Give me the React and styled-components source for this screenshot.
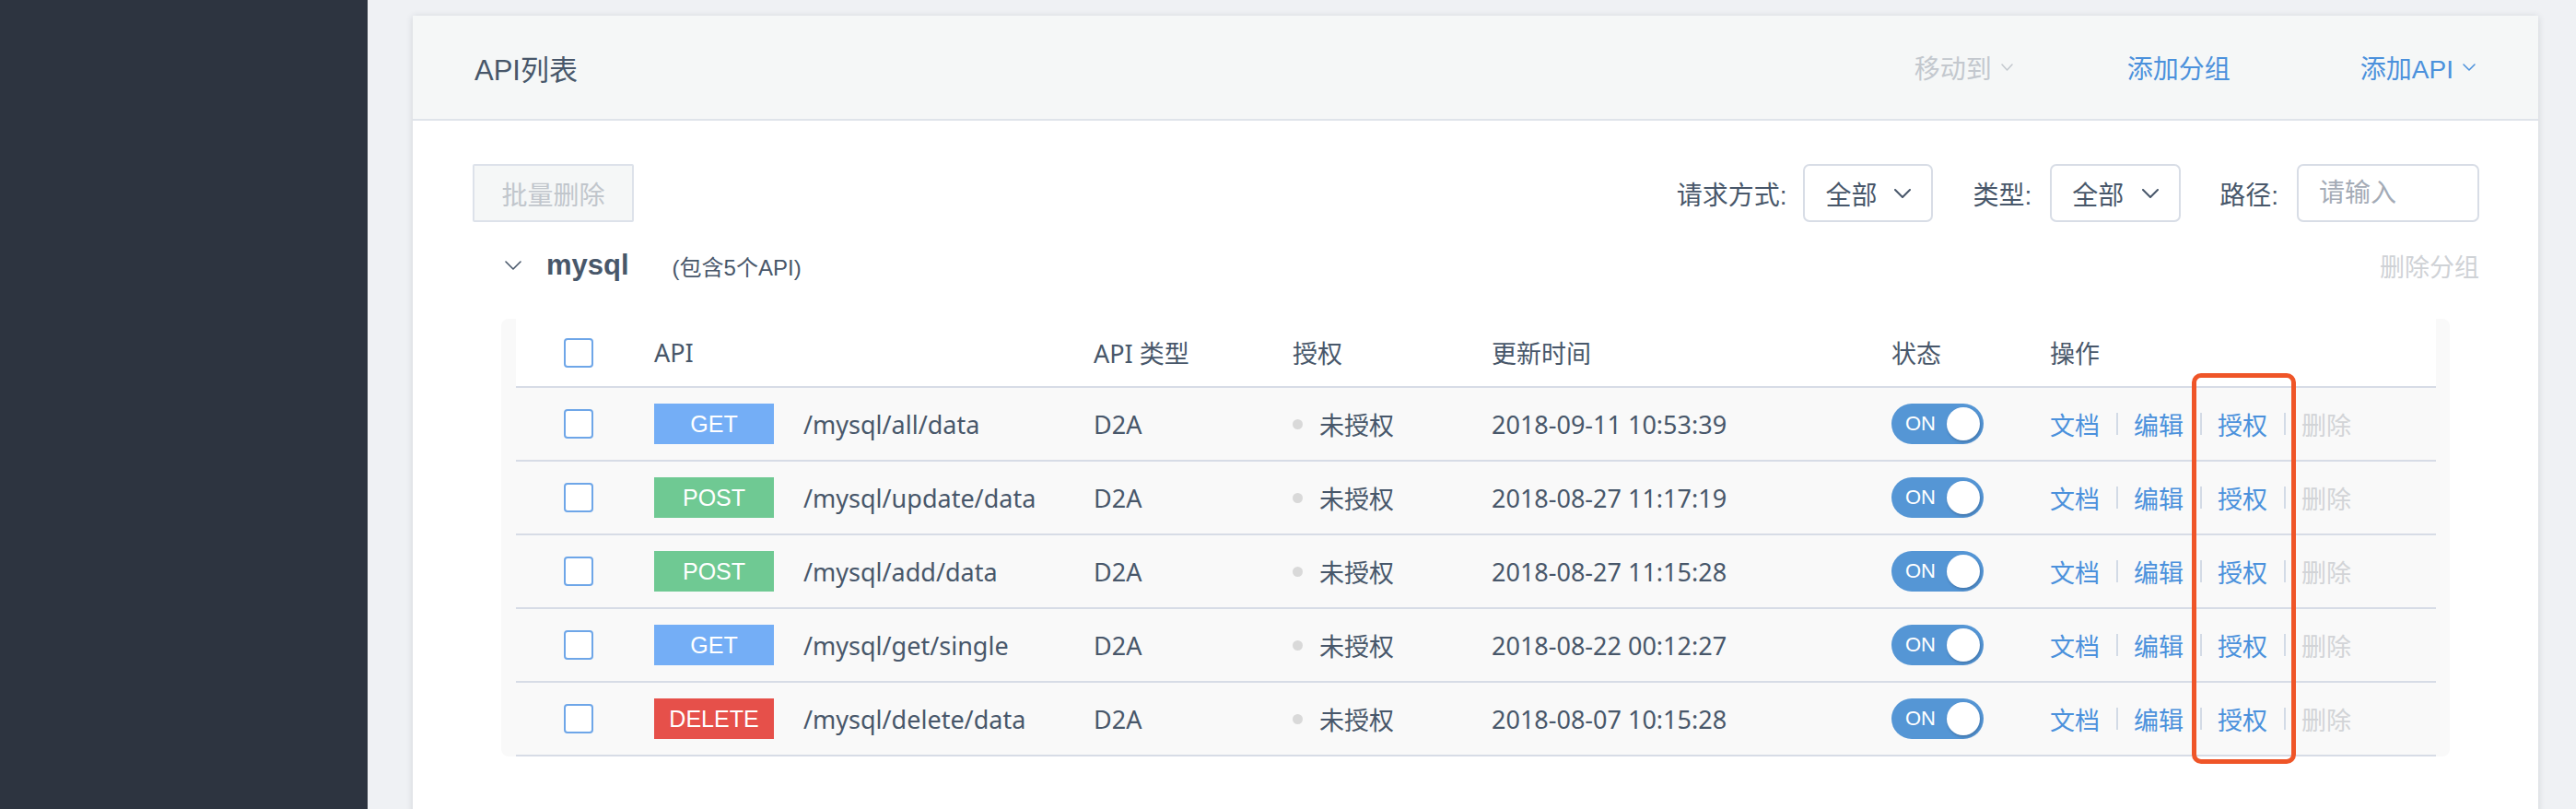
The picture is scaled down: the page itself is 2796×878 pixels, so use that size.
import React from "react";
import styled, { createGlobalStyle } from "styled-components";

const GlobalStyle = createGlobalStyle`
  html, body { margin: 0; padding: 0; }
  body {
    background: #eff1f4;
    font-family: "Liberation Sans", "Noto Sans CJK SC", sans-serif;
    color: #48576a;
  }
  * { box-sizing: border-box; }
`;

const Layout = styled.div`
  display: flex;
  min-height: 878px;
  height: 878px;
  overflow: hidden;
`;

const Sidebar = styled.aside`
  width: 399px;
  flex: none;
  background: #2d3440;
`;

const Main = styled.main`
  flex: 1;
  padding: 17px 41px 0 49px;
`;

const Card = styled.section`
  background: #fff;
  min-height: 900px;
  box-shadow: 0 1px 7px rgba(40, 50, 70, 0.16);
`;

const CardHeader = styled.header`
  height: 114px;
  background: #f5f7f7;
  border-bottom: 2px solid #dfe4ea;
  display: flex;
  align-items: center;
  justify-content: space-between;
  padding: 0 68px 0 67px;
`;

const Title = styled.h1`
  margin: 0;
  font-size: 31px;
  font-weight: 400;
  color: #48576a;
`;

const HeaderActions = styled.div`
  display: flex;
  align-items: center;
`;

const HeaderAction = styled.span`
  display: inline-flex;
  align-items: center;
  gap: 10px;
  font-size: 28px;
  margin-left: ${(p) => p.$ml || 0}px;
  color: ${(p) => (p.$disabled ? "#c3c8ce" : "#4b91dc")};
`;

const Body = styled.div`
  padding: 47px 64px 0 65px;
`;

const Toolbar = styled.div`
  display: flex;
  align-items: center;
  justify-content: space-between;
  height: 63px;
`;

const BatchButton = styled.button`
  width: 175px;
  height: 63px;
  border: 2px solid #dde2ea;
  background: #f5f7f7;
  color: #c1c6cc;
  font-family: inherit;
  font-size: 28px;
  border-radius: 2px;
  padding: 0;
`;

const Filters = styled.div`
  display: flex;
  align-items: center;
`;

const FilterLabel = styled.span`
  font-size: 28px;
  color: #48576a;
  margin-left: ${(p) => p.$ml || 0}px;
  margin-right: ${(p) => p.$mr || 18}px;
`;

const Select = styled.div`
  width: ${(p) => p.$w}px;
  height: 63px;
  border: 2px solid #d8dde6;
  border-radius: 7px;
  display: flex;
  align-items: center;
  padding: 0 22px 0 22px;
  justify-content: space-between;
  font-size: 28px;
  color: #48576a;
  background: #fff;
`;

const Input = styled.input`
  width: 198px;
  height: 63px;
  border: 2px solid #d8dde6;
  border-radius: 7px;
  padding: 0 0 0 22px;
  font-family: inherit;
  font-size: 28px;
  color: #48576a;
  outline: none;
  &::placeholder { color: #a4abb6; }
`;

const GroupRow = styled.div`
  margin-top: 27px;
  height: 40px;
  display: flex;
  align-items: center;
`;

const GroupToggle = styled.span`
  display: inline-flex;
  margin-left: 35px;
  margin-right: 27px;
`;

const GroupName = styled.span`
  font-size: 31px;
  font-weight: 700;
  color: #48576a;
`;

const GroupCount = styled.span`
  font-size: 24px;
  color: #48576a;
  margin-left: 47px;
`;

const GroupDelete = styled.span`
  margin-left: auto;
  font-size: 27px;
  color: #cfd2d6;
`;

const TableWrap = styled.div`
  position: relative;
  margin: 38px 32px 0 31px;
  background: #f9f9f9;
  border-radius: 8px;
  padding: 0 15px 0 16px;
`;

const Row = styled.div`
  display: grid;
  grid-template-columns: 150px 477px 216px 216px 434px 172px 1fr;
  align-items: center;
  height: ${(p) => (p.$head ? 75 : 80)}px;
  border-bottom: 2px solid #d7dce6;
  background: ${(p) => (p.$head ? "#fff" : "#f9f9f9")};
  font-family: "Noto Sans", "Noto Sans CJK SC", sans-serif;
  font-size: 27px;
  color: #48576a;
`;

const Cell = styled.div`
  display: flex;
  align-items: center;
  white-space: nowrap;
  padding-left: ${(p) => p.$pl || 0}px;
`;

const Checkbox = styled.span`
  width: 32px;
  height: 32px;
  border: 2px solid #6ea6e8;
  border-radius: 4px;
  background: #fff;
`;

const METHOD_COLORS = {
  GET: "#74aef6",
  POST: "#6fc993",
  DELETE: "#e6504a",
};

const MethodBadge = styled.span`
  width: 130px;
  height: 44px;
  display: inline-flex;
  align-items: center;
  justify-content: center;
  color: #fff;
  font-family: "Liberation Sans", sans-serif;
  font-size: 25px;
  background: ${(p) => METHOD_COLORS[p.$method]};
  margin-right: 32px;
`;

const Dot = styled.span`
  width: 11px;
  height: 11px;
  border-radius: 50%;
  background: #d9d9d9;
  margin-right: 18px;
`;

const Toggle = styled.span`
  position: relative;
  width: 100px;
  height: 44px;
  border-radius: 22px;
  background: #5596d5;
  color: #fff;
  font-family: "Liberation Sans", sans-serif;
  font-size: 22px;
  display: inline-flex;
  align-items: center;
  padding-left: 15px;
`;

const Knob = styled.span`
  position: absolute;
  right: 4px;
  top: 4px;
  width: 36px;
  height: 36px;
  border-radius: 50%;
  background: #fff;
  box-shadow: 1px 2px 3px rgba(30, 60, 100, 0.35);
`;

const OpLink = styled.span`
  color: ${(p) => (p.$disabled ? "#d2d4d7" : "#4b91dc")};
`;

const OpSep = styled.span`
  width: 2px;
  height: 24px;
  background: #d3dbe6;
  margin: 0 17px 0 18px;
`;

const Highlight = styled.div`
  position: absolute;
  left: 1835px;
  top: 59px;
  width: 113px;
  height: 424px;
  border: 5px solid #ef5528;
  border-radius: 10px;
  pointer-events: none;
`;

const Chevron = ({ w = 18, h = 10, color = "#48576a", sw = 2 }) => (
  <svg width={w} height={h} viewBox={`0 0 ${w} ${h}`} fill="none">
    <polyline
      points={`1,1 ${w / 2},${h - 1} ${w - 1},1`}
      stroke={color}
      strokeWidth={sw}
      strokeLinecap="round"
      strokeLinejoin="round"
    />
  </svg>
);

const apis = [
  { method: "GET", path: "/mysql/all/data", time: "2018-09-11 10:53:39" },
  { method: "POST", path: "/mysql/update/data", time: "2018-08-27 11:17:19" },
  { method: "POST", path: "/mysql/add/data", time: "2018-08-27 11:15:28" },
  { method: "GET", path: "/mysql/get/single", time: "2018-08-22 00:12:27" },
  { method: "DELETE", path: "/mysql/delete/data", time: "2018-08-07 10:15:28" },
];

export default function App() {
  return (
    <>
      <GlobalStyle />
      <Layout>
        <Sidebar />
        <Main>
          <Card>
            <CardHeader>
              <Title>API列表</Title>
              <HeaderActions>
                <HeaderAction $disabled>
                  移动到
                  <Chevron w={13} h={8} color="#c3c8ce" sw={1.5} />
                </HeaderAction>
                <HeaderAction $ml={124}>添加分组</HeaderAction>
                <HeaderAction $ml={141}>
                  添加API
                  <Chevron w={14} h={8} color="#4b91dc" sw={1.5} />
                </HeaderAction>
              </HeaderActions>
            </CardHeader>
            <Body>
              <Toolbar>
                <BatchButton>批量删除</BatchButton>
                <Filters>
                  <FilterLabel>请求方式:</FilterLabel>
                  <Select $w={141}>
                    全部
                    <Chevron />
                  </Select>
                  <FilterLabel $ml={43} $mr={20}>类型:</FilterLabel>
                  <Select $w={142}>
                    全部
                    <Chevron />
                  </Select>
                  <FilterLabel $ml={42} $mr={20}>路径:</FilterLabel>
                  <Input placeholder="请输入" />
                </Filters>
              </Toolbar>
              <GroupRow>
                <GroupToggle>
                  <Chevron w={18} h={10} sw={1.6} />
                </GroupToggle>
                <GroupName>mysql</GroupName>
                <GroupCount>(包含5个API)</GroupCount>
                <GroupDelete>删除分组</GroupDelete>
              </GroupRow>
              <TableWrap>
                <Row $head>
                  <Cell $pl={52}>
                    <Checkbox />
                  </Cell>
                  <Cell>API</Cell>
                  <Cell>API 类型</Cell>
                  <Cell>授权</Cell>
                  <Cell>更新时间</Cell>
                  <Cell>状态</Cell>
                  <Cell>操作</Cell>
                </Row>
                {apis.map((a) => (
                  <Row key={a.path}>
                    <Cell $pl={52}>
                      <Checkbox />
                    </Cell>
                    <Cell>
                      <MethodBadge $method={a.method}>{a.method}</MethodBadge>
                      {a.path}
                    </Cell>
                    <Cell>D2A</Cell>
                    <Cell>
                      <Dot />
                      未授权
                    </Cell>
                    <Cell>{a.time}</Cell>
                    <Cell>
                      <Toggle>
                        ON
                        <Knob />
                      </Toggle>
                    </Cell>
                    <Cell>
                      <OpLink>文档</OpLink>
                      <OpSep />
                      <OpLink>编辑</OpLink>
                      <OpSep />
                      <OpLink>授权</OpLink>
                      <OpSep />
                      <OpLink $disabled>删除</OpLink>
                    </Cell>
                  </Row>
                ))}
                <Highlight />
              </TableWrap>
            </Body>
          </Card>
        </Main>
      </Layout>
    </>
  );
}
